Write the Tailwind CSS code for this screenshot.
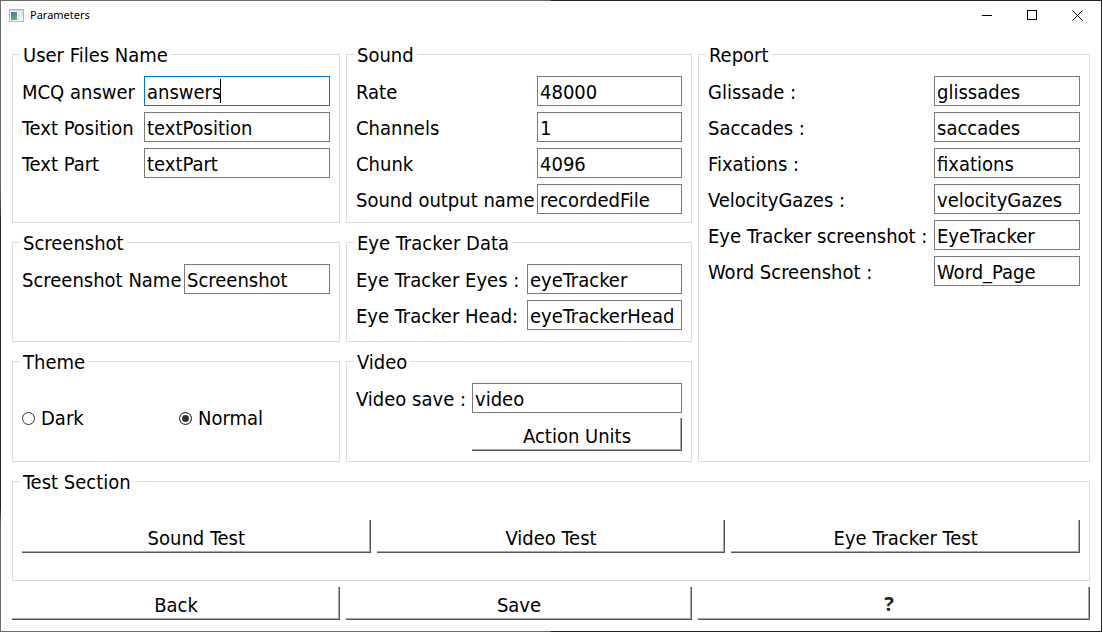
<!DOCTYPE html>
<html lang="en">
<head>
<meta charset="utf-8">
<meta name="viewport" content="width=device-width, initial-scale=1">
<title>Parameters</title>
<script src="https://cdn.jsdelivr.net/npm/@tailwindcss/browser@4"></script>
</head>
<body class="font-['DejaVu_Sans_Condensed','DejaVu_Sans',sans-serif] text-[20px] leading-6 text-black">
<div class="flex min-h-screen flex-col bg-[linear-gradient(to_bottom,#6b6b6b_30%,#222222_36%,#222222_80%,#6b6b6b_83%),linear-gradient(to_right,#6b6b6b_50%,#222222_50%)] bg-[length:1px_100%,100%_100%] bg-no-repeat p-px">
  <div class="flex grow flex-col bg-white">
    <header class="mb-[2px] flex h-7 items-center pr-px pl-2">
      <svg class="mr-[6px]" width="15" height="13" viewBox="0 0 15 13" aria-hidden="true">
        <defs><linearGradient id="pane" x1="0" y1="0" x2="0.4" y2="1"><stop offset="0" stop-color="#4a78a8"/><stop offset="1" stop-color="#5fae7c"/></linearGradient></defs>
        <rect x="0.5" y="0.5" width="14" height="12" fill="#f4f5f6" stroke="#b4b8bc"/>
        <rect x="1" y="1" width="13" height="1" fill="#d0d4d8"/>
        <rect x="2" y="3" width="6" height="8" fill="url(#pane)"/>
        <rect x="9" y="3" width="2" height="8" fill="#e4e7ea"/>
        <rect x="12" y="3" width="2" height="4" fill="#cfe0d4"/>
      </svg>
      <h1 class="grow font-['Noto_Sans',sans-serif] text-[11px] leading-4">Parameters</h1>
      <button type="button" aria-label="Minimize" class="flex h-full w-[45px] items-center justify-center"><svg width="10" height="10" viewBox="0 0 10 10" shape-rendering="crispEdges"><rect y="5" width="10" height="1"/></svg></button>
      <button type="button" aria-label="Maximize" class="flex h-full w-[45px] items-center justify-center"><svg width="10" height="10" viewBox="0 0 10 10" fill="none" stroke="#000"><rect x="0.5" y="0.5" width="9" height="9"/></svg></button>
      <button type="button" aria-label="Close" class="flex h-full w-[46px] items-center justify-center"><svg width="11" height="11" viewBox="0 0 11 11" stroke="#000"><path d="M0.5 0.5L10.5 10.5M10.5 0.5L0.5 10.5"/></svg></button>
    </header>

    <main class="flex grow flex-col gap-[6px] p-[11px]">
      <div class="grid grow grid-cols-[328fr_346fr_392fr] grid-rows-[181fr_112fr_113fr_112fr] gap-x-[6px] gap-y-[7px]">
        <fieldset class="min-w-0 border border-[#dcdcdc] px-[7px] pb-2">
          <legend class="px-[3px] pt-[2px] leading-[22px]">User Files Name</legend>
          <div class="grid grid-cols-[116px_minmax(0,1fr)] items-center gap-[6px] px-[2px] pt-[10px] whitespace-nowrap [&_label]:pt-[2px]">
            <label for="mcq">MCQ answer</label>
            <div class="relative">
              <input id="mcq" value="answers" class="block h-[30px] w-full border border-[#0078d7] bg-white px-[2px] pt-[2px] outline-none">
              <span class="absolute top-[3px] left-[76px] h-6 w-px bg-black"></span>
            </div>
            <label for="tpos">Text Position</label><input id="tpos" value="textPosition" class="h-[30px] w-full border border-[#7a7a7a] bg-white px-[2px] pt-[2px]">
            <label for="tpart">Text Part</label><input id="tpart" value="textPart" class="h-[30px] w-full border border-[#7a7a7a] bg-white px-[2px] pt-[2px]">
          </div>
        </fieldset>

        <fieldset class="min-w-0 border border-[#dcdcdc] px-[7px] pb-2">
          <legend class="px-[3px] pt-[2px] leading-[22px]">Sound</legend>
          <div class="grid grid-cols-[175px_minmax(0,1fr)] items-center gap-[6px] px-[2px] pt-[10px] whitespace-nowrap [&_label]:pt-[2px]">
            <label for="rate">Rate</label><input id="rate" value="48000" class="h-[30px] w-full border border-[#7a7a7a] bg-white px-[2px] pt-[2px]">
            <label for="chan">Channels</label><input id="chan" value="1" class="h-[30px] w-full border border-[#7a7a7a] bg-white px-[2px] pt-[2px]">
            <label for="chunk">Chunk</label><input id="chunk" value="4096" class="h-[30px] w-full border border-[#7a7a7a] bg-white px-[2px] pt-[2px]">
            <label for="sout">Sound output name</label><input id="sout" value="recordedFile" class="h-[30px] w-full border border-[#7a7a7a] bg-white px-[2px] pt-[2px]">
          </div>
        </fieldset>

        <fieldset class="row-span-3 min-w-0 border border-[#dcdcdc] px-[7px] pb-2">
          <legend class="px-[3px] pt-[2px] leading-[22px]">Report</legend>
          <div class="grid grid-cols-[220px_minmax(0,1fr)] items-center gap-[6px] px-[2px] pt-[10px] whitespace-nowrap [&_label]:pt-[2px]">
            <label for="gli">Glissade :</label><input id="gli" value="glissades" class="h-[30px] w-full border border-[#7a7a7a] bg-white px-[2px] pt-[2px]">
            <label for="sac">Saccades :</label><input id="sac" value="saccades" class="h-[30px] w-full border border-[#7a7a7a] bg-white px-[2px] pt-[2px]">
            <label for="fix">Fixations :</label><input id="fix" value="fixations" class="h-[30px] w-full border border-[#7a7a7a] bg-white px-[2px] pt-[2px]">
            <label for="vel">VelocityGazes :</label><input id="vel" value="velocityGazes" class="h-[30px] w-full border border-[#7a7a7a] bg-white px-[2px] pt-[2px]">
            <label for="ets">Eye Tracker screenshot :</label><input id="ets" value="EyeTracker" class="h-[30px] w-full border border-[#7a7a7a] bg-white px-[2px] pt-[2px]">
            <label for="wsc">Word Screenshot :</label><input id="wsc" value="Word_Page" class="h-[30px] w-full border border-[#7a7a7a] bg-white px-[2px] pt-[2px]">
          </div>
        </fieldset>

        <fieldset class="min-w-0 border border-[#dcdcdc] px-[7px]">
          <legend class="px-[3px] pt-[2px] leading-[22px]">Screenshot</legend>
          <div class="grid grid-cols-[156px_minmax(0,1fr)] items-center gap-[6px] px-[2px] pt-[10px] whitespace-nowrap [&_label]:pt-[2px]">
            <label for="scr">Screenshot Name</label><input id="scr" value="Screenshot" class="h-[30px] w-full border border-[#7a7a7a] bg-white px-[2px] pt-[2px]">
          </div>
        </fieldset>

        <fieldset class="min-w-0 border border-[#dcdcdc] px-[7px]">
          <legend class="px-[3px] pt-[2px] leading-[22px]">Eye Tracker Data</legend>
          <div class="grid grid-cols-[165px_minmax(0,1fr)] items-center gap-[6px] px-[2px] pt-[10px] whitespace-nowrap [&_label]:pt-[2px]">
            <label for="eye">Eye Tracker Eyes :</label><input id="eye" value="eyeTracker" class="h-[30px] w-full border border-[#7a7a7a] bg-white px-[2px] pt-[2px]">
            <label for="head">Eye Tracker Head:</label><input id="head" value="eyeTrackerHead" class="h-[30px] w-full border border-[#7a7a7a] bg-white px-[2px] pt-[2px]">
          </div>
        </fieldset>

        <fieldset class="flex min-w-0 flex-col border border-[#dcdcdc] px-[7px]">
          <legend class="px-[3px] pt-[2px] leading-[22px]">Theme</legend>
          <div class="grid grow grid-cols-2 items-center gap-[6px] px-[2px] pt-[2px]">
            <label class="flex items-center gap-[6px]"><input type="radio" name="theme" class="size-[13px] appearance-none rounded-full border border-[#333333] bg-white checked:bg-[#333333] checked:shadow-[inset_0_0_0_2px_#ffffff]">Dark</label>
            <label class="flex items-center gap-[6px]"><input type="radio" name="theme" checked class="size-[13px] appearance-none rounded-full border border-[#333333] bg-white checked:bg-[#333333] checked:shadow-[inset_0_0_0_2px_#ffffff]">Normal</label>
          </div>
        </fieldset>

        <fieldset class="min-w-0 border border-[#dcdcdc] px-[7px]">
          <legend class="px-[3px] pt-[2px] leading-[22px]">Video</legend>
          <div class="grid grid-cols-[110px_minmax(0,1fr)] items-center gap-x-[6px] gap-y-[5px] px-[2px] pt-[10px] whitespace-nowrap [&_label]:pt-[2px]">
            <label for="vid">Video save :</label><input id="vid" value="video" class="h-[30px] w-full border border-[#7a7a7a] bg-white px-[2px] pt-[2px]">
            <button type="button" class="col-start-2 h-[33px] bg-white pt-[2px] shadow-[inset_-1px_-1px_#555555,inset_-2px_-2px_#a8a8a8]">Action Units</button>
          </div>
        </fieldset>

        <fieldset class="col-span-3 flex min-w-0 flex-col border border-[#dcdcdc] px-[7px]">
          <legend class="px-[3px] pt-[2px] leading-[22px]">Test Section</legend>
          <div class="grid grow grid-cols-3 items-center gap-[6px] px-[2px]">
            <button type="button" class="h-[33px] bg-white pt-[2px] shadow-[inset_-1px_-1px_#555555,inset_-2px_-2px_#a8a8a8]">Sound Test</button>
            <button type="button" class="h-[33px] bg-white pt-[2px] shadow-[inset_-1px_-1px_#555555,inset_-2px_-2px_#a8a8a8]">Video Test</button>
            <button type="button" class="h-[33px] bg-white pt-[2px] shadow-[inset_-1px_-1px_#555555,inset_-2px_-2px_#a8a8a8]">Eye Tracker Test</button>
          </div>
        </fieldset>
      </div>

      <div class="grid grid-cols-[328fr_346fr_392fr] gap-[6px]">
        <button type="button" class="h-[33px] bg-white pt-[2px] shadow-[inset_-1px_-1px_#555555,inset_-2px_-2px_#a8a8a8]">Back</button>
        <button type="button" class="h-[33px] bg-white pt-[2px] shadow-[inset_-1px_-1px_#555555,inset_-2px_-2px_#a8a8a8]">Save</button>
        <button type="button" class="h-[33px] bg-white pr-[10px] font-['Noto_Sans',sans-serif] font-bold text-[#222222] shadow-[inset_-1px_-1px_#555555,inset_-2px_-2px_#a8a8a8]">?</button>
      </div>
    </main>
  </div>
</div>
</body>
</html>
